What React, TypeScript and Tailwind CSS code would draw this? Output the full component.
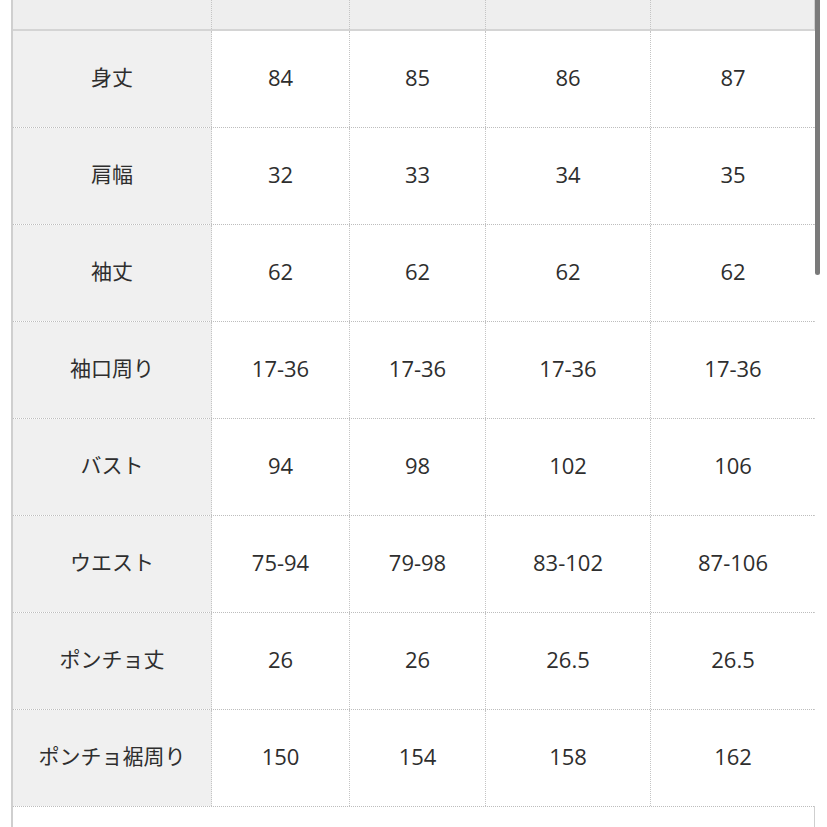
const ROWS: [string, string[]][] = [
  ["身丈", ["84", "85", "86", "87"]],
  ["肩幅", ["32", "33", "34", "35"]],
  ["袖丈", ["62", "62", "62", "62"]],
  ["袖口周り", ["17-36", "17-36", "17-36", "17-36"]],
  ["バスト", ["94", "98", "102", "106"]],
  ["ウエスト", ["75-94", "79-98", "83-102", "87-106"]],
  ["ポンチョ丈", ["26", "26", "26.5", "26.5"]],
  ["ポンチョ裾周り", ["150", "154", "158", "162"]],
];

const GRID = "grid grid-cols-[199px_138px_136px_165px_164px]";

export default function App() {
  return (
    <div
      className="relative h-[827px] w-[827px] overflow-hidden bg-white text-[#2e2e2e]"
      style={{ fontFamily: '"Open Sans", "Noto Sans CJK JP", sans-serif' }}
    >
      <div className="ml-[11px] w-[804px] border-l-2 border-r border-[#cfcfcf]">
        <div className={`${GRID} h-[31px] border-b-2 border-[#d4d4d4] bg-[#eeeeee]`}>
          {[0, 1, 2, 3, 4].map((i) => (
            <div
              key={i}
              className={i < 4 ? "border-r border-dotted border-[#c4c4c4]" : ""}
            />
          ))}
        </div>

        {ROWS.map(([label, vals]) => (
          <div
            key={label}
            className={`${GRID} h-[97px] border-b border-dotted border-[#bdbdbd]`}
          >
            <div className="flex items-center justify-center border-r border-dotted border-[#c4c4c4] bg-[#f0f0f0] pb-[2px] text-[21px]">
              {label}
            </div>
            {vals.map((v, i) => (
              <div
                key={i}
                className={`flex items-center justify-center bg-white pb-[4px] text-[22px] ${
                  i < 3 ? "border-r border-dotted border-[#c4c4c4]" : ""
                }`}
              >
                {v}
              </div>
            ))}
          </div>
        ))}

        <div className="h-[40px] bg-white" />
      </div>

      <div className="absolute left-[815px] top-0 h-[275px] w-[5px] rounded-b-sm bg-[#7a7a7a]" />
    </div>
  );
}
